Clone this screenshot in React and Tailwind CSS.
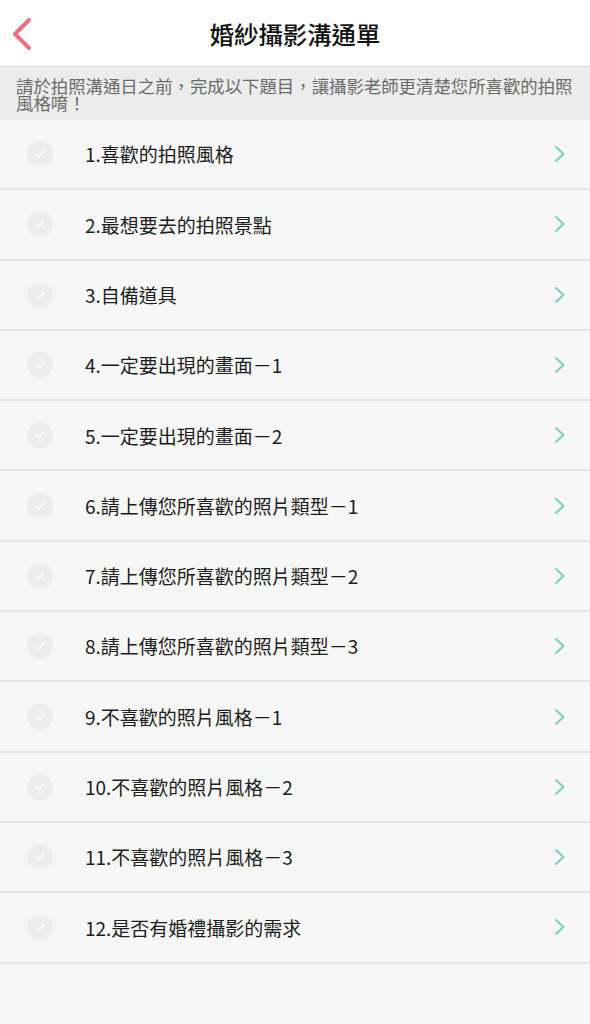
import React from "react";

const items = [
  "1.喜歡的拍照風格",
  "2.最想要去的拍照景點",
  "3.自備道具",
  "4.一定要出現的畫面－1",
  "5.一定要出現的畫面－2",
  "6.請上傳您所喜歡的照片類型－1",
  "7.請上傳您所喜歡的照片類型－2",
  "8.請上傳您所喜歡的照片類型－3",
  "9.不喜歡的照片風格－1",
  "10.不喜歡的照片風格－2",
  "11.不喜歡的照片風格－3",
  "12.是否有婚禮攝影的需求",
];

const font = { fontFamily: '"Noto Sans CJK TC", "Noto Sans", sans-serif' };

export default function App() {
  return (
    <div className="min-h-screen bg-[#f7f7f7]" style={font}>
      <header className="grid h-[67px] grid-cols-[66px_1fr_66px] items-center border-b border-[#dadada] bg-white pt-[3px]">
        <div className="pl-[10px]">
          <svg width="24" height="36" viewBox="0 0 24 36" fill="none">
            <path d="M19 3 L5 17 L19 31" stroke="#ec6f80" strokeWidth="4" strokeLinecap="round" strokeLinejoin="round" />
          </svg>
        </div>
        <h1 className="text-center text-[24.4px] font-medium leading-none text-[#111]">婚紗攝影溝通單</h1>
        <div />
      </header>
      <div className="bg-[#ececec] px-[16px] pt-[10px] pb-[9px] text-[17.4px] leading-[17px] text-[#6a6a6a]">
        請於拍照溝通日之前，完成以下題目，讓攝影老師更清楚您所喜歡的拍照風格唷！
      </div>
      <ul>
        {items.map((t) => (
          <li key={t} className="flex h-[70.3px] items-center border-b-2 border-[#e4e4e4] pl-[27px] pr-[24px]">
            <span className="flex h-[26px] w-[26px] items-center justify-center rounded-full bg-[#ececec]">
              <svg width="14" height="14" viewBox="0 0 14 14" fill="none">
                <path d="M3 7.2 L6 10 L11 4" stroke="#ffffff" strokeWidth="1.6" strokeLinecap="round" strokeLinejoin="round" />
              </svg>
            </span>
            <span className="ml-[32px] flex-1 pt-[1px] text-[19px] text-[#1c1c1c]">{t}</span>
            <svg width="12" height="18" viewBox="0 0 12 18" fill="none">
              <path d="M2 2 L9.5 9 L2 16" stroke="#7fcfc9" strokeWidth="2.2" strokeLinecap="round" strokeLinejoin="round" />
            </svg>
          </li>
        ))}
      </ul>
    </div>
  );
}
